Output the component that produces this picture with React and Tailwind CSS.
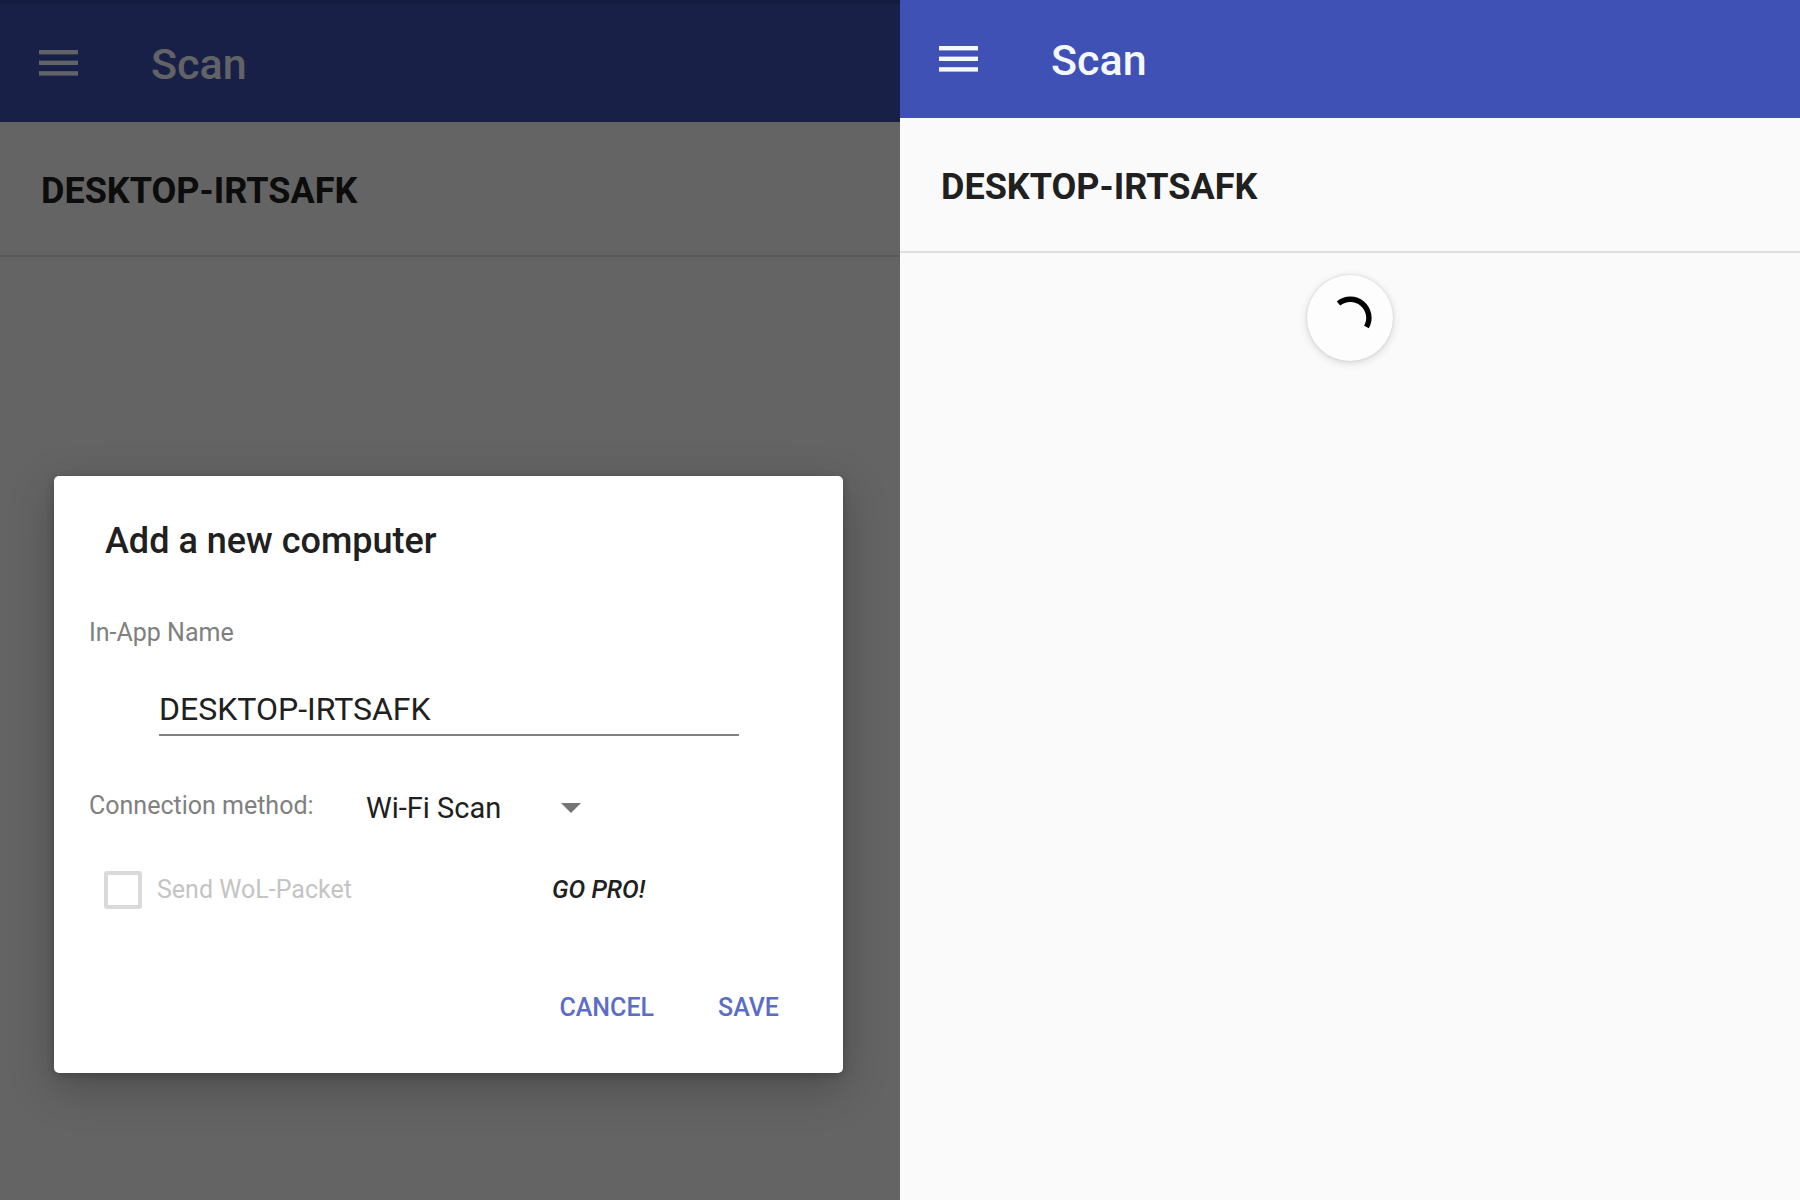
import React, { useState } from 'react';

const HamburgerIcon = () => (
  <svg width="39" height="26" viewBox="0 0 39 26" fill="currentColor" aria-hidden="true">
    <rect x="0" y="0" width="39" height="4.4" />
    <rect x="0" y="10.6" width="39" height="4.4" />
    <rect x="0" y="21.2" width="39" height="4.4" />
  </svg>
);

// App bar shared by both screens
const AppBar = ({ title }) => (
  <header className="flex h-[118px] items-center bg-[#3f51b5] pl-[39px] text-[#f5f7ff]">
    <button type="button" aria-label="Open menu">
      <HamburgerIcon />
    </button>
    <h1 className="ml-[73px] pt-0.5 text-[43px] leading-[48px] font-medium">{title}</h1>
  </header>
);

const DeviceRow = ({ name }) => (
  <li className="flex h-[135px] items-center border-b-2 border-[#dfdfdf] pt-1 pl-[41px]">
    <span className="text-[36px] leading-[40px] font-bold text-[#202020]">{name}</span>
  </li>
);

const Spinner = () => (
  <div
    role="status"
    aria-label="Scanning"
    className="mx-auto mt-[22px] size-[86px] rounded-full bg-[#fdfdfd] shadow-[0_2px_8px_rgba(0,0,0,0.14),0_0_3px_rgba(0,0,0,0.12)]"
  >
    <svg viewBox="0 0 86 86" fill="none" aria-hidden="true">
      <path d="M31.5 28.5 A18.6 18.6 0 0 1 59.5 52" stroke="#000" strokeWidth="5.4" />
    </svg>
  </div>
);

const AddComputerDialog = () => {
  const [name, setName] = useState('DESKTOP-IRTSAFK');
  const [method, setMethod] = useState('wifi');

  return (
    <form
      role="dialog"
      aria-labelledby="dialog-title"
      onSubmit={(e) => e.preventDefault()}
      className="rounded-[5px] bg-white pt-[41px] pr-[52px] pb-[45px] pl-[35px] shadow-[0_14px_44px_rgba(0,0,0,0.25),0_2px_8px_rgba(0,0,0,0.2)]"
    >
      <h2 id="dialog-title" className="pl-4 text-[36px] leading-[48px] font-medium text-[#202020]">
        Add a new computer
      </h2>

      <label htmlFor="app-name" className="mt-[52px] block text-[25px] leading-[32px] text-[#808080]">
        In-App Name
      </label>
      <input
        id="app-name"
        type="text"
        value={name}
        onChange={(e) => setName(e.target.value)}
        className="mt-[37px] mr-[52px] ml-[70px] block h-[50px] w-[calc(100%-122px)] border-b-2 border-[#808080] pb-0.5 text-[32px] leading-[40px] text-[#202020] outline-none"
      />

      <div className="mt-[50px] flex items-center">
        <label htmlFor="method" className="w-[277px] pb-1 text-[25px] leading-[40px] text-[#808080]">
          Connection method:
        </label>
        <div className="relative">
          <select
            id="method"
            value={method}
            onChange={(e) => setMethod(e.target.value)}
            className="block w-[215px] appearance-none bg-transparent text-[29px] leading-[40px] text-[#202020] outline-none"
          >
            <option value="wifi">Wi-Fi Scan</option>
          </select>
          <svg
            className="pointer-events-none absolute inset-y-0 right-0 my-auto text-[#757575]"
            width="20"
            height="10"
            viewBox="0 0 20 10"
            fill="currentColor"
            aria-hidden="true"
          >
            <path d="M0 0h20L10 10z" />
          </svg>
        </div>
      </div>

      <div className="mt-10 flex items-center pl-[15px]">
        <input
          id="wol"
          type="checkbox"
          disabled
          className="size-[38px] appearance-none rounded-[3px] border-4 border-[#dadada]"
        />
        <label htmlFor="wol" className="ml-[15px] w-[395px] text-[25px] leading-[40px] text-[#c4c4c4]">
          Send WoL-Packet
        </label>
        <button type="button" className="text-[25px] leading-[40px] font-medium text-[#202020] italic">
          GO PRO!
        </button>
      </div>

      <div className="mt-[78px] flex justify-end text-[25px] leading-[40px] font-medium text-[#5b6dc6]">
        <button type="button" className="px-3">CANCEL</button>
        <button type="submit" className="ml-10 px-3">SAVE</button>
      </div>
    </form>
  );
};

const App = () => (
  <div className="grid min-h-screen grid-cols-2 font-['Roboto',sans-serif]">
    <section className="relative bg-[#fafafa]">
      {/* Thin edge of the status bar */}
      <div className="h-1 bg-[#35449f]" />
      <AppBar title="Scan" />
      <ul>
        <DeviceRow name="DESKTOP-IRTSAFK" />
      </ul>
      <div className="absolute inset-0 flex flex-col justify-end overflow-hidden bg-black/60 pr-[57px] pb-[127px] pl-[54px]">
        <AddComputerDialog />
      </div>
    </section>

    <section className="bg-[#fafafa]">
      <AppBar title="Scan" />
      <ul>
        <DeviceRow name="DESKTOP-IRTSAFK" />
      </ul>
      <Spinner />
    </section>
  </div>
);

export default App;
